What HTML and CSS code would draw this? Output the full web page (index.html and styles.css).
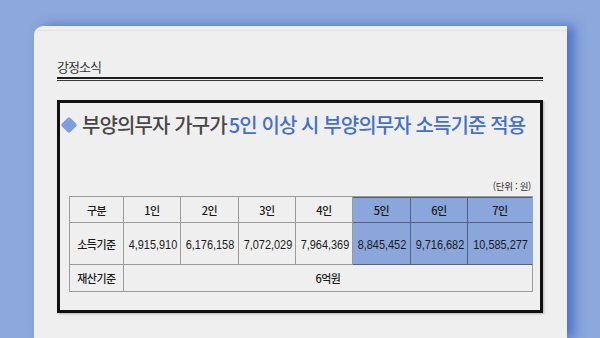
FILE: index.html
```html
<!DOCTYPE html>
<html lang="ko">
<head>
<meta charset="utf-8">
<link rel="stylesheet" href="styles.css">
</head>
<body>
<div class="stage">
  <div class="paper">
    <div class="edge"></div>
    <div class="section">강정소식</div>
    <div class="rule"></div>
    <div class="box">
      <h1 class="title"><span class="diamond"></span><span class="dark">부양의무자 가구가</span><span class="blue">5인 이상 시 부양의무자 소득기준 적용</span></h1>
      <div class="unit">(단위 : 원)</div>
      <table class="grid">
        <tr class="head">
          <td class="c0">구분</td>
          <td class="c1">1인</td>
          <td class="c2">2인</td>
          <td class="c3">3인</td>
          <td class="c4">4인</td>
          <td class="c5 hl">5인</td>
          <td class="c6 hl">6인</td>
          <td class="c7 hl">7인</td>
        </tr>
        <tr class="income">
          <td class="label">소득기준</td>
          <td><span class="num">4,915,910</span></td>
          <td><span class="num">6,176,158</span></td>
          <td><span class="num">7,072,029</span></td>
          <td><span class="num">7,964,369</span></td>
          <td class="hl"><span class="num">8,845,452</span></td>
          <td class="hl"><span class="num">9,716,682</span></td>
          <td class="hl last"><span class="num">10,585,277</span></td>
        </tr>
        <tr class="asset">
          <td class="label">재산기준</td>
          <td class="wide" colspan="7">6억원</td>
        </tr>
      </table>
    </div>
  </div>
</div>
</body>
</html>
```

FILE: styles.css
```css
html, body {
  margin: 0;
  padding: 0;
}
body {
  width: 600px;
  height: 338px;
  overflow: hidden;
  background: #8ca8dc;
  font-family: "Noto Sans CJK KR", "Noto Sans", sans-serif;
}
.stage {
  padding: 26px 0 0 34px;
}
.paper {
  position: relative;
  width: 533px;
  height: 312px;
  box-sizing: border-box;
  background: #efefef;
  border-top-left-radius: 9px;
  box-shadow: 7px 0 12px rgba(50, 85, 190, 0.7);
  padding: 33px 24px 0 23px;
}
.edge {
  position: absolute;
  left: 4px;
  right: 0;
  top: 4px;
  height: 3px;
  border-top: 1px solid #e2e2e2;
}
.section {
  font-size: 13px;
  line-height: 16px;
  letter-spacing: -1px;
  color: #333;
  height: 18px;
}
.rule {
  height: 1px;
  border-top: 2px solid #1e1e1e;
  border-bottom: 1px solid #3a3a3a;
}
.box {
  margin-top: 19px;
  border: 3px solid #111;
  height: 213px;
  box-sizing: border-box;
  padding: 0 8px 0 9px;
  box-shadow: 1px 1px 2px rgba(0, 0, 0, 0.25);
}
.title {
  margin: 9px 0 0 -9px;
  font-size: 20px;
  line-height: 26px;
  font-weight: 500;
  letter-spacing: -0.9px;
  white-space: nowrap;
  display: flex;
  align-items: center;
}
.diamond {
  display: inline-block;
  width: 12px;
  height: 12px;
  background: #7f9fdc;
  border-radius: 2px;
  transform: rotate(45deg);
  margin: 0 7px 0 3px;
}
.dark {
  color: #474747;
  margin-right: 2px;
}
.blue {
  color: #4570c6;
}
.unit {
  margin-top: 42px;
  text-align: right;
  font-size: 9.5px;
  line-height: 12px;
  color: #333;
  letter-spacing: -0.3px;
  padding-right: 1px;
}
.grid {
  margin-top: 4px;
  width: 464px;
  border-collapse: separate;
  border-spacing: 0;
  border-top: 1px solid #9a9a9a;
  border-left: 1px solid #9a9a9a;
  table-layout: fixed;
  color: #1a1a1a;
}
.grid td {
  border-right: 1px solid #9a9a9a;
  border-bottom: 1px solid #9a9a9a;
  text-align: center;
  padding: 0;
  font-size: 11px;
  font-weight: 500;
  letter-spacing: -0.5px;
  white-space: nowrap;
}
.c0 { width: 53px; }
.c1 { width: 56px; }
.c2 { width: 57px; }
.c3 { width: 56px; }
.c4 { width: 56px; }
.c5 { width: 57px; }
.c6 { width: 56px; }
.c7 { width: 64px; }
.head td { height: 25px; }
.income td { height: 41px; }
.asset td { height: 26px; }
.num {
  display: inline-block;
  font-family: "Liberation Sans", "DejaVu Sans", sans-serif;
  font-size: 13px;
  font-weight: 400;
  letter-spacing: 0;
  transform: scaleX(0.84);
}
.grid td.hl {
  background: #8aa6da;
  border-right-color: #56627a;
  border-bottom-color: #56627a;
}
.head .hl {
  box-shadow: inset 0 1px 0 #56627a;
}
.grid td.c7.hl,
.grid td.last {
  border-right-color: #8aa6da;
}
```
